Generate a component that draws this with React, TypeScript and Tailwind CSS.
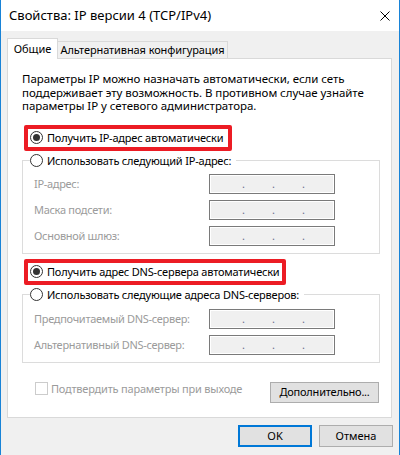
import { ReactNode } from 'react'

function Radio({ checked }: { checked?: boolean }) {
  return (
    <span className="flex h-[13px] w-[13px] shrink-0 items-center justify-center rounded-full border border-[#333333] bg-white">
      {checked && <span className="h-[7px] w-[7px] rounded-full bg-[#333333]" />}
    </span>
  )
}

function IpField() {
  return (
    <div className="flex h-[20px] w-[126px] items-center border border-[#7a7a7a] bg-[#f0f0f0] pl-[32px] text-[11px] leading-[11px] text-[#6d6d8d] shadow-[inset_0_0_0_1px_#ffffff]">
      <span className="w-[30px]">.</span>
      <span className="w-[30px]">.</span>
      <span className="w-[30px]">.</span>
    </div>
  )
}

function FieldRow({ label }: { label: string }) {
  return (
    <div className="flex items-center">
      <span className="w-[186px] whitespace-nowrap pl-[11px] tracking-[-0.3px] text-[#9b9b9b]">{label}</span>
      <IpField />
    </div>
  )
}

function Highlight({ width, children }: { width: string; children: ReactNode }) {
  return (
    <div className={`ml-[16px] flex h-[26px] items-center gap-[4px] whitespace-nowrap rounded-[2px] border-[4px] border-[#ec1c24] bg-white pl-[2px] tracking-[-0.2px] ${width}`}>
      {children}
    </div>
  )
}

function Group({ label, children, pt }: { label: string; children: ReactNode; pt: string }) {
  return (
    <fieldset className="ml-[14px] mt-[3px] w-[358px] border border-[#dcdcdc] pb-[7px]">
      <legend className="ml-[7px] flex h-[14px] items-center gap-[4px] whitespace-nowrap pr-[5px] tracking-[-0.2px]">
        <Radio />
        <span>{label}</span>
      </legend>
      <div className={`flex flex-col gap-[6px] ${pt}`}>{children}</div>
    </fieldset>
  )
}

export default function App() {
  return (
    <div className="flex h-[455px] w-[400px] flex-col border-x border-[#1883d7] bg-[#f0f0f0] font-['Noto_Sans',sans-serif] text-[11px] leading-[13.5px] text-black">
      <div className="flex h-[31px] shrink-0 items-center justify-between bg-white pl-[8px] pr-[9px]">
        <span className="text-[13px]">Свойства: IP версии 4 (TCP/IPv4)</span>
        <svg width="10" height="10" viewBox="0 0 10 10" className="text-black">
          <path d="M0.5 0.5 L9.5 9.5 M9.5 0.5 L0.5 9.5" stroke="currentColor" strokeWidth="1" />
        </svg>
      </div>

      <div className="ml-[6px] mr-[7px] pt-[7px]">
        <div className="flex h-[20px] items-end whitespace-nowrap">
          <div className="relative z-10 -mb-[1px] flex h-[21px] w-[51px] items-center justify-center border-x border-t border-[#d9d9d9] bg-white">
            Общие
          </div>
          <div className="flex h-[17px] w-[170px] items-center justify-center border-r border-t border-[#d9d9d9] tracking-[-0.1px]">
            Альтернативная конфигурация
          </div>
        </div>

        <div className="flex h-[360px] flex-col border border-[#d9d9d9] bg-white pt-[13px]">
          <p className="pl-[14px] text-[11.5px] tracking-[-0.05px]">
            Параметры IP можно назначать автоматически, если сеть
            <br />
            поддерживает эту возможность. В противном случае узнайте
            <br />
            параметры IP у сетевого администратора.
          </p>

          <div className="mt-[12px]">
            <Highlight width="w-[208px]">
              <Radio checked />
              <span>Получить IP-адрес автоматически</span>
            </Highlight>
          </div>

          <Group label="Использовать следующий IP-адрес:" pt="pt-[6px]">
            <FieldRow label="IP-адрес:" />
            <FieldRow label="Маска подсети:" />
            <FieldRow label="Основной шлюз:" />
          </Group>

          <div className="mt-[5px]">
            <Highlight width="w-[262px]">
              <Radio checked />
              <span>Получить адрес DNS-сервера автоматически</span>
            </Highlight>
          </div>

          <Group label="Использовать следующие адреса DNS-серверов:" pt="pt-[7px]">
            <FieldRow label="Предпочитаемый DNS-сервер:" />
            <FieldRow label="Альтернативный DNS-сервер:" />
          </Group>

          <div className="mt-[19px] flex items-start justify-between pl-[27px] pr-[12px]">
            <label className="flex items-center gap-[3px] whitespace-nowrap tracking-[-0.2px] text-[#9b9b9b]">
              <span className="h-[13px] w-[13px] border border-[#cccccc] bg-white" />
              Подтвердить параметры при выходе
            </label>
            <button className="flex h-[21px] w-[109px] items-center justify-center whitespace-nowrap border border-[#adadad] bg-[#e1e1e1] tracking-[-0.2px]">
              Дополнительно...
            </button>
          </div>
        </div>
      </div>

      <div className="mr-[6px] mt-[7px] flex justify-end gap-[7px]">
        <button className="flex h-[22px] w-[74px] items-center justify-center border-2 border-[#0078d7] bg-[#e1e1e1]">
          OK
        </button>
        <button className="flex h-[22px] w-[74px] items-center justify-center border border-[#adadad] bg-[#e1e1e1]">
          Отмена
        </button>
      </div>
    </div>
  )
}
